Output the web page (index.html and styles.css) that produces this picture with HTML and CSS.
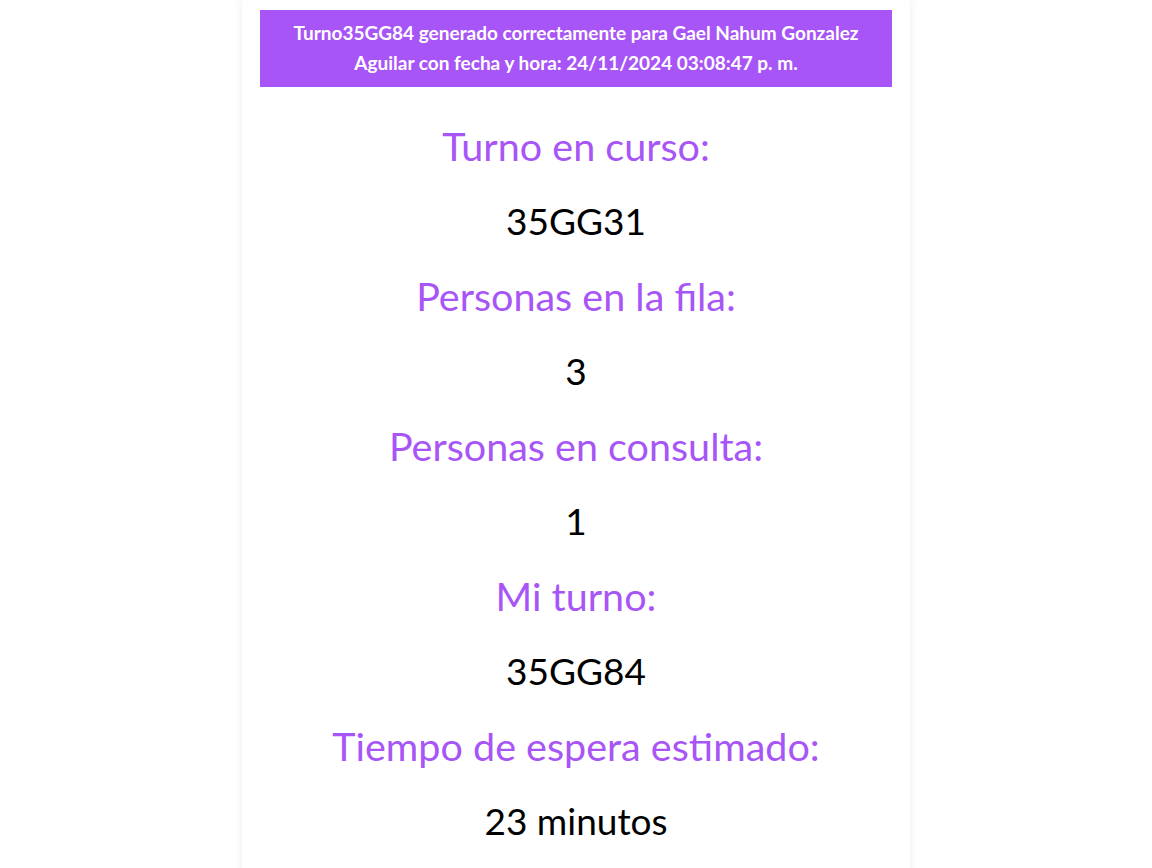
FILE: index.html
```html
<!DOCTYPE html>
<html lang="es">
<head>
<meta charset="utf-8">
<title>Turno</title>
<link rel="stylesheet" href="styles.css">
</head>
<body>
<main class="card">
  <div class="banner">Turno35GG84 generado correctamente para Gael Nahum Gonzalez Aguilar con fecha y hora: 24/11/2024 03:08:47 p. m.</div>
  <section class="info">
    <h2 class="label">Turno en curso:</h2>
    <p class="value">35GG31</p>
    <h2 class="label">Personas en la fila:</h2>
    <p class="value">3</p>
    <h2 class="label">Personas en consulta:</h2>
    <p class="value">1</p>
    <h2 class="label">Mi turno:</h2>
    <p class="value">35GG84</p>
    <h2 class="label">Tiempo de espera estimado:</h2>
    <p class="value">23 minutos</p>
  </section>
</main>
</body>
</html>
```

FILE: styles.css
```css
html, body {
  margin: 0;
  padding: 0;
  background: #ffffff;
}
body {
  font-family: "Lato", "Open Sans", sans-serif;
  overflow: hidden;
}
.card {
  width: 668px;
  margin: 0 auto;
  box-sizing: border-box;
  padding: 10px 18px 40px;
  background: #ffffff;
  box-shadow: 0 0 10px rgba(0, 0, 0, 0.08);
  min-height: 900px;
}
.banner {
  background: #a855f7;
  color: #ffffff;
  font-weight: 700;
  font-size: 19px;
  line-height: 30px;
  text-align: center;
  padding: 8px 20px 9px;
}
.info {
  display: flex;
  flex-direction: column;
  align-items: center;
  gap: 25px;
  margin-top: 34px;
}
.label {
  margin: 0;
  color: #a855f7;
  font-weight: 400;
  font-size: 39.5px;
  line-height: 50px;
}
.value {
  margin: 0;
  color: #000000;
  font-size: 37px;
  line-height: 50px;
}
```
